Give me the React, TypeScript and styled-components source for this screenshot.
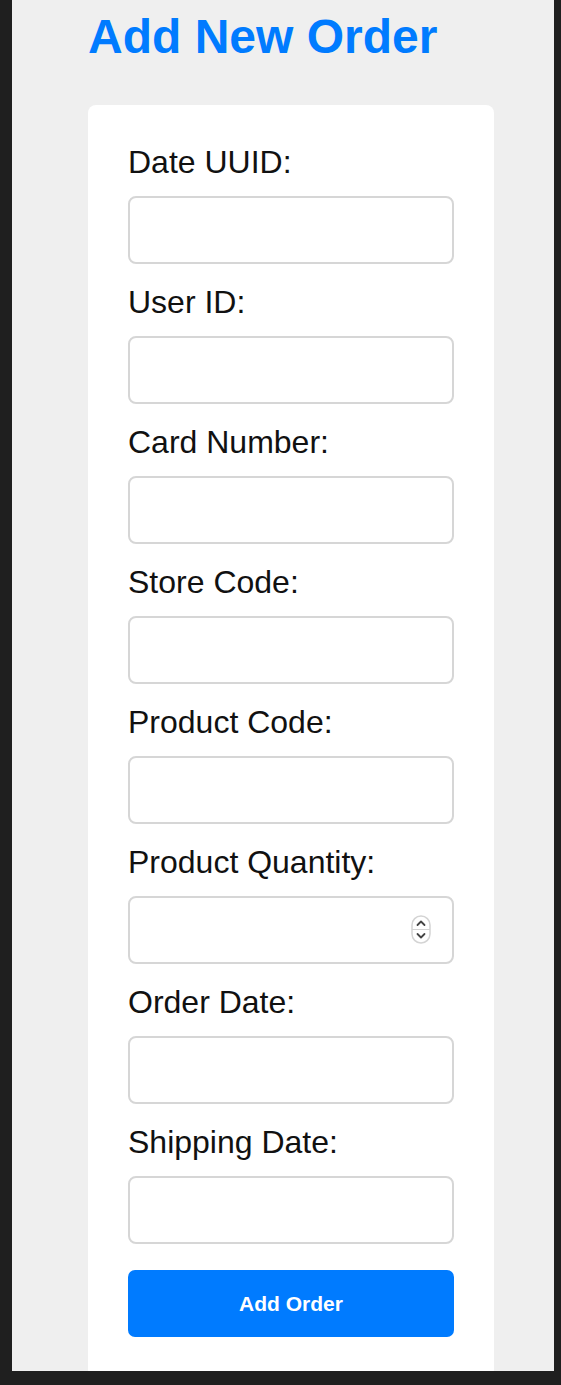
import React from "react";
import styled, { createGlobalStyle } from "styled-components";

const Global = createGlobalStyle`
  html, body { margin: 0; padding: 0; background: #1f1f1f; }
  body { font-family: "Liberation Sans", Arial, sans-serif; }
  * { box-sizing: border-box; }
`;

const Frame = styled.div`
  margin-left: 12px;
  width: 542px;
  height: 1371px;
  background: #efefef;
  overflow: hidden;
  padding: 9px 0 0 76px;
`;

const Title = styled.h1`
  margin: 0 0 41px 0;
  font-size: 48px;
  line-height: 55px;
  font-weight: 700;
  color: #007bff;
`;

const Card = styled.div`
  width: 406px;
  background: #ffffff;
  border-radius: 8px;
  padding: 39px 40px 40px;
`;

const Form = styled.form`
  display: flex;
  flex-direction: column;
  gap: 20px;
`;

const Field = styled.div`
  display: flex;
  flex-direction: column;
  gap: 15px;
`;

const Label = styled.label`
  font-size: 32px;
  line-height: 37px;
  color: #111;
`;

const InputWrap = styled.div`
  position: relative;
`;

const Input = styled.input`
  display: block;
  width: 100%;
  height: 68px;
  border: 2px solid #d6d6d6;
  border-radius: 8px;
  background: #fff;
  font-size: 28px;
  padding: 0 14px;
  font-family: inherit;
  outline: none;
  -moz-appearance: textfield;
  &::-webkit-inner-spin-button,
  &::-webkit-outer-spin-button {
    -webkit-appearance: none;
    margin: 0;
  }
`;

const Stepper = styled.svg`
  position: absolute;
  right: 23px;
  top: 19px;
  pointer-events: none;
`;

const Button = styled.button`
  margin-top: 6px;
  width: 100%;
  height: 67px;
  border: none;
  border-radius: 7px;
  background: #007bff;
  color: #fff;
  font-family: inherit;
  font-size: 21px;
  font-weight: 700;
  cursor: pointer;
`;

const fields = [
  { label: "Date UUID:", type: "text" },
  { label: "User ID:", type: "text" },
  { label: "Card Number:", type: "text" },
  { label: "Store Code:", type: "text" },
  { label: "Product Code:", type: "text" },
  { label: "Product Quantity:", type: "number" },
  { label: "Order Date:", type: "text" },
  { label: "Shipping Date:", type: "text" },
];

export default function App() {
  return (
    <>
      <Global />
      <Frame>
        <Title>Add New Order</Title>
        <Card>
          <Form onSubmit={(e) => e.preventDefault()}>
            {fields.map((f, i) => (
              <Field key={i}>
                <Label htmlFor={`f${i}`}>{f.label}</Label>
                <InputWrap>
                  <Input id={`f${i}`} type={f.type} />
                  {f.type === "number" && (
                    <Stepper width="20" height="29" viewBox="0 0 20 29">
                      <rect x="1" y="1" width="18" height="27" rx="9" fill="#fff" stroke="#d4d4d4" strokeWidth="1.5" />
                      <line x1="1" y1="14.5" x2="19" y2="14.5" stroke="#d4d4d4" strokeWidth="1" />
                      <path d="M6.5 10 L10 6.5 L13.5 10" fill="none" stroke="#444" strokeWidth="1.8" strokeLinecap="round" strokeLinejoin="round" />
                      <path d="M6.5 19 L10 22.5 L13.5 19" fill="none" stroke="#444" strokeWidth="1.8" strokeLinecap="round" strokeLinejoin="round" />
                    </Stepper>
                  )}
                </InputWrap>
              </Field>
            ))}
            <Button type="submit">Add Order</Button>
          </Form>
        </Card>
      </Frame>
    </>
  );
}
